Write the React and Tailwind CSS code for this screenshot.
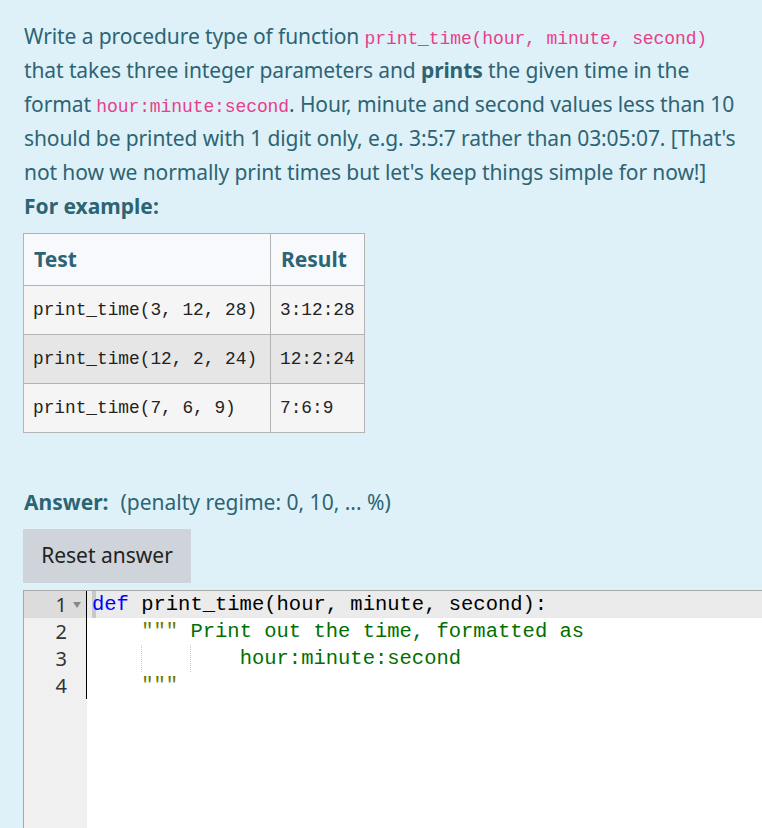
const rows = [
  { test: 'print_time(3, 12, 28)', result: '3:12:28', bg: 'bg-[#f5f5f5]' },
  { test: 'print_time(12, 2, 24)', result: '12:2:24', bg: 'bg-[#e6e6e6]' },
  { test: 'print_time(7, 6, 9)', result: '7:6:9', bg: 'bg-[#f5f5f5]' },
];

const Code = ({ children }) => (
  <code className="font-['Liberation_Mono','DejaVu_Sans_Mono',monospace] text-[18px] leading-none text-[#e83e8c]">
    {children}
  </code>
);

export default function App() {
  return (
    <div className="min-h-[828px] bg-[#def1f8] font-['Noto_Sans','Open_Sans',sans-serif] text-[#2d6474] overflow-hidden">
      <div className="pl-6 pt-[19px]">
        <p className="text-[21px] leading-[34px] tracking-[-0.1px] whitespace-nowrap">
          Write a procedure type of function <Code>print_time(hour, minute, second)</Code>
          <br />
          that takes three integer parameters and <b className="font-bold">prints</b> the given time in the
          <br />
          format <Code>hour:minute:second</Code>. Hour, minute and second values less than 10
          <br />
          should be printed with 1 digit only, e.g. 3:5:7 rather than 03:05:07. [That's
          <br />
          not how we normally print times but let's keep things simple for now!]
        </p>
        <p className="text-[21px] leading-[34px] font-bold">For example:</p>

        <table className="mt-[10px] -ml-px border-collapse border border-[#b3b3b3] text-[#222]">
          <thead>
            <tr className="bg-[#f8f9fc] h-[52px]">
              <th className="border border-[#b3b3b3] px-[10px] text-left text-[21px] font-bold text-[#2d6474] w-[247px]">
                Test
              </th>
              <th className="border border-[#b3b3b3] px-[10px] text-left text-[21px] font-bold text-[#2d6474] w-[94px]">
                Result
              </th>
            </tr>
          </thead>
          <tbody className="font-['Liberation_Mono','DejaVu_Sans_Mono',monospace] text-[17.8px]">
            {rows.map((r) => (
              <tr key={r.test} className={`${r.bg} h-[49px]`}>
                <td className="border border-[#b3b3b3] px-[9px] whitespace-pre">{r.test}</td>
                <td className="border border-[#b3b3b3] px-[9px] whitespace-pre">{r.result}</td>
              </tr>
            ))}
          </tbody>
        </table>

        <div className="mt-[52px] text-[21px] leading-[34px]">
          <b className="font-bold">Answer:</b>
          <span className="ml-3">(penalty regime: 0, 10, ... %)</span>
        </div>

        <button className="mt-[10px] -ml-px h-[54px] w-[168px] bg-[#ced4da] text-[21px] text-[#222]">
          Reset answer
        </button>
      </div>

      <div className="mt-[7px] ml-[23px] border-t border-l border-[#a9a9a9] flex font-['Liberation_Mono','DejaVu_Sans_Mono',monospace] text-[20.5px] leading-[27px] min-h-[240px]">
        <div className="w-[63px] bg-[#f0f0f0] text-[#333] shrink-0 font-['Noto_Sans',sans-serif] text-[20px]">
          {[1, 2, 3, 4].map((n) => (
            <div
              key={n}
              className={`h-[27px] flex items-center justify-end pr-[20px] relative ${n === 1 ? 'bg-[#dcdcdc]' : ''}`}
            >
              {n}
              {n === 1 && (
                <span className="absolute right-[6px] top-[11px] w-0 h-0 border-l-[4px] border-r-[4px] border-t-[6px] border-l-transparent border-r-transparent border-t-[#888]" />
              )}
            </div>
          ))}
        </div>
        <div className="flex-1 bg-white relative">
          <div className="absolute left-[-1px] top-0 h-[108px] w-px bg-black" />
          <div className="whitespace-pre text-black">
            <div className="h-[27px] bg-[#ebebeb] pl-[5px] relative">
              <span className="absolute left-[5px] top-0 h-[27px] w-[4px] bg-[#c8c8c8]" />
              <span className="relative text-[#0000ff]">def</span>
              <span className="relative"> print_time(hour, minute, second):</span>
            </div>
            <div className="h-[27px] pl-[5px]">
              {'    '}
              <span className="text-[#6b7d00]">"""</span>
              <span className="text-[#006f00]"> Print out the time, formatted as</span>
            </div>
            <div className="h-[27px] pl-[5px] relative">
              <span className="absolute left-[54px] top-0 h-[27px] border-l border-dotted border-[#ccc]" />
              <span className="absolute left-[103px] top-0 h-[27px] border-l border-dotted border-[#ccc]" />
              {'            '}
              <span className="text-[#006f00]">hour:minute:second</span>
            </div>
            <div className="h-[27px] pl-[5px]">
              {'    '}
              <span className="text-[#6b7d00]">"""</span>
            </div>
          </div>
        </div>
      </div>
    </div>
  );
}
